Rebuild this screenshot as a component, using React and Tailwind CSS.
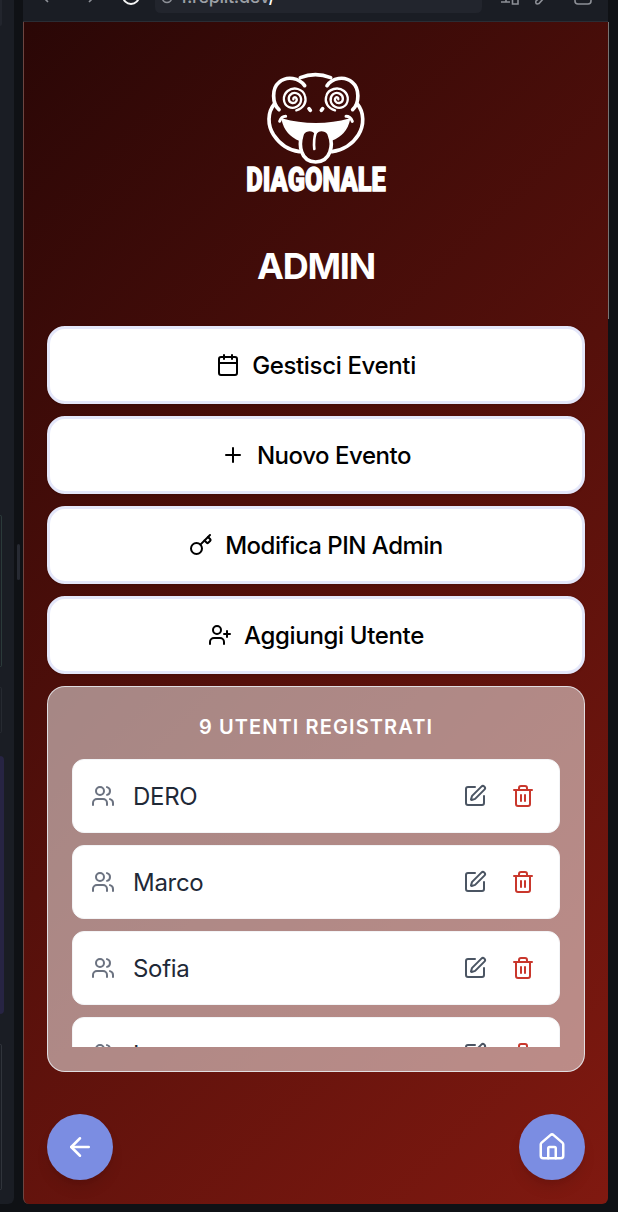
import React from "react";
import { Calendar, Plus, Key, UserPlus, Users, SquarePen, Trash2, ArrowLeft, House } from "lucide-react";

function Logo() {
  return (
    <svg className="block h-[140px] w-[160px] overflow-visible" viewBox="0 0 480 420" fill="none" stroke="white" strokeWidth="11" strokeLinecap="round" strokeLinejoin="round">
      <path d="M193 53 Q238 35 284 53" />
      <path d="M129 149 C108 130 107 85 129 67 C153 46 190 54 206 77" />
      <path d="M350 149 C371 130 371 85 349 67 C325 46 288 54 273 77" />
      <path d="M115 132 C94 157 94 196 113 225 C131 252 160 271 190 275" />
      <path d="M364 132 C385 157 385 196 367 225 C350 252 320 271 288 275" />
      <path strokeWidth="7" d="M181 151 C203 145 213 126 207 108 C201 86 173 79 155 93 C138 107 141 133 158 141 C174 149 193 138 195 122 C197 105 181 94 167 101 C154 108 156 127 169 129 C179 130 186 120 180 113 C176 110 171 113 172 118" />
      <path strokeWidth="7" d="M297 151 C275 145 265 126 271 108 C277 86 306 79 324 93 C341 107 338 133 321 141 C305 149 286 138 284 122 C282 105 297 94 311 101 C325 108 323 127 310 129 C300 130 293 120 299 113 C303 110 308 113 307 118" />
      <path strokeWidth="11" d="M219 146 L223 151 M260 146 L256 151" />
      <path fill="white" strokeWidth="5" d="M139 178 C201 196 278 196 340 178 C334 207 315 229 286 240 C290 218 277 207 260 208 Q246 209 239 216 Q228 207 215 208 C198 208 189 221 192 241 C163 229 145 208 139 178 Z" />
      <path strokeWidth="9" d="M131 184 Q136 169 149 169 M349 184 Q343 169 330 169" />
      <path d="M197 227 C189 253 191 304 239 306 C287 304 291 253 281 227 C277 206 249 204 239 216 C228 204 201 206 197 227" />
      <path strokeWidth="8" d="M239 218 Q232 240 235 267" />
      <text x="31" y="393" fill="white" strokeWidth="4" strokeLinejoin="miter" fontFamily="Roboto, sans-serif" fontWeight="900" fontSize="101" textLength="418" lengthAdjust="spacingAndGlyphs">DIAGONALE</text>
    </svg>
  );
}

const actions = [
  { icon: Calendar, label: "Gestisci Eventi", tracking: "tracking-[-0.35px]" },
  { icon: Plus, label: "Nuovo Evento", tracking: "tracking-[-0.45px]" },
  { icon: Key, label: "Modifica PIN Admin", tracking: "tracking-[-0.5px]" },
  { icon: UserPlus, label: "Aggiungi Utente", tracking: "tracking-[-0.35px]" },
];

const users = ["DERO", "Marco", "Sofia", "Luca"];

function Sidebar() {
  return (
    <div className="flex h-[1204px] w-3.5 shrink-0 flex-col overflow-hidden rounded-br-md bg-[#1a1d24]">
      <div className="h-[26px] w-0.5 rounded-br-sm bg-[#22252d]" />
      <div className="mt-[489px] h-[152px] w-0.5 rounded-r-sm border-y border-r border-[#2b3a3a]" />
      <div className="mt-5 h-[46px] w-0.5 rounded-r-sm border-y border-r border-[#262a31]" />
      <div className="mt-[23px] h-[258px] w-1 rounded-r bg-[#272443]" />
      <div className="mt-[30px] h-[146px] w-0.5 rounded-r-sm border-y border-r border-[#30343b]" />
    </div>
  );
}

function BrowserBar() {
  return (
    <div className="relative h-[22px] overflow-hidden border-b border-[#2a2d35] bg-[#1a1d24]">
      <svg className="absolute left-0 top-0 h-[22px] w-[585px]" viewBox="23 0 585 22" fill="none" stroke="#8d9097" strokeWidth="1.6">
        <path d="M155 -8 H482 V7 Q482 13 476 13 H161 Q155 13 155 7 Z" fill="#22252d" stroke="none" />
        <path d="M43 -3 L48 2 M94 -3 L89 2" />
        <circle cx="131" cy="-4" r="8" stroke="#f5f5f5" strokeWidth="2" />
        <circle cx="167" cy="-2" r="4.5" />
        <path d="M501 2 H510 M506 -3 V2 M512.5 -4 H518 V4 H512.5 Z M542 -4 L536 1 Q535 5 539 3.5 L544 -2 M575 -6 V1 Q575 4 578 4 H588 Q591 4 591 1 V-6" />
      </svg>
      <div className="absolute left-[153px] top-[-15px] font-[Inter] text-[18px] font-medium leading-6 tracking-[-0.3px] text-[#9da0a6]">4.replit.dev<span className="text-white">/</span></div>
    </div>
  );
}

export default function App() {
  return (
    <div className="flex h-[1212px] w-[618px] overflow-hidden bg-[#0f1115] font-[Inter,sans-serif]">
      <Sidebar />
      <div className="flex w-[9px] shrink-0 items-start pl-[3px] pt-[544px]">
        <div className="h-9 w-[3px] rounded-full bg-[#272a33]" />
      </div>
      <main className="relative h-[1204px] w-[585px] shrink-0">
        <BrowserBar />
        <div className="flex h-[1182px] flex-col items-center overflow-hidden rounded-b-md border-l border-[#6d4541] bg-[linear-gradient(135deg,#2a0706,#801910)] pl-[23px] pr-[23px] pt-[38px]">
          <Logo />
          <h1 className="mt-[42px] text-[36px] font-bold leading-[48px] tracking-[-1.2px] text-white">ADMIN</h1>
          <div className="mt-9 flex w-[538px] flex-col gap-3">
            {actions.map(({ icon: Icon, label, tracking }) => (
              <button key={label} className="flex h-[78px] items-center justify-center gap-3 rounded-[18px] border-[3px] border-[#e4e7fa] bg-white text-2xl font-medium text-black shadow-sm">
                <Icon size={24} strokeWidth={2} />
                <span className={`pt-0.5 ${tracking}`}>{label}</span>
              </button>
            ))}
            <section className="h-[386px] rounded-[18px] border border-[#e5e7eb]/90 bg-white/50 px-[24px] pt-[25px]">
              <h2 className="text-center text-[20px] font-semibold leading-[30px] tracking-[1.1px] text-white">9 UTENTI REGISTRATI</h2>
              <div className="mt-[17px] flex h-[288px] flex-col gap-3 overflow-hidden">
                {users.map((name) => (
                  <div key={name} className="flex h-[74px] shrink-0 items-center rounded-xl border border-gray-100 bg-white pl-[18px] pr-6">
                    <Users size={24} strokeWidth={2} className="text-[#6b7280]" />
                    <span className="ml-[18px] flex-1 pt-0.5 text-2xl tracking-[-0.3px] text-[#1f2937]">{name}</span>
                    <SquarePen size={24} className="text-[#4b5563]" />
                    <Trash2 size={24} className="ml-6 text-[#c9372c]" />
                  </div>
                ))}
              </div>
            </section>
          </div>
          <div className="mt-[42px] flex w-[538px] justify-between">
            <button className="flex size-[66px] items-center justify-center rounded-full bg-[#7b8de2] text-white shadow-lg"><ArrowLeft size={30} /></button>
            <button className="flex size-[66px] items-center justify-center rounded-full bg-[#7b8de2] text-white shadow-lg"><House size={30} /></button>
          </div>
        </div>
        <div className="absolute -right-px top-[22px] h-[297px] w-px bg-[#777473]" />
      </main>
    </div>
  );
}
